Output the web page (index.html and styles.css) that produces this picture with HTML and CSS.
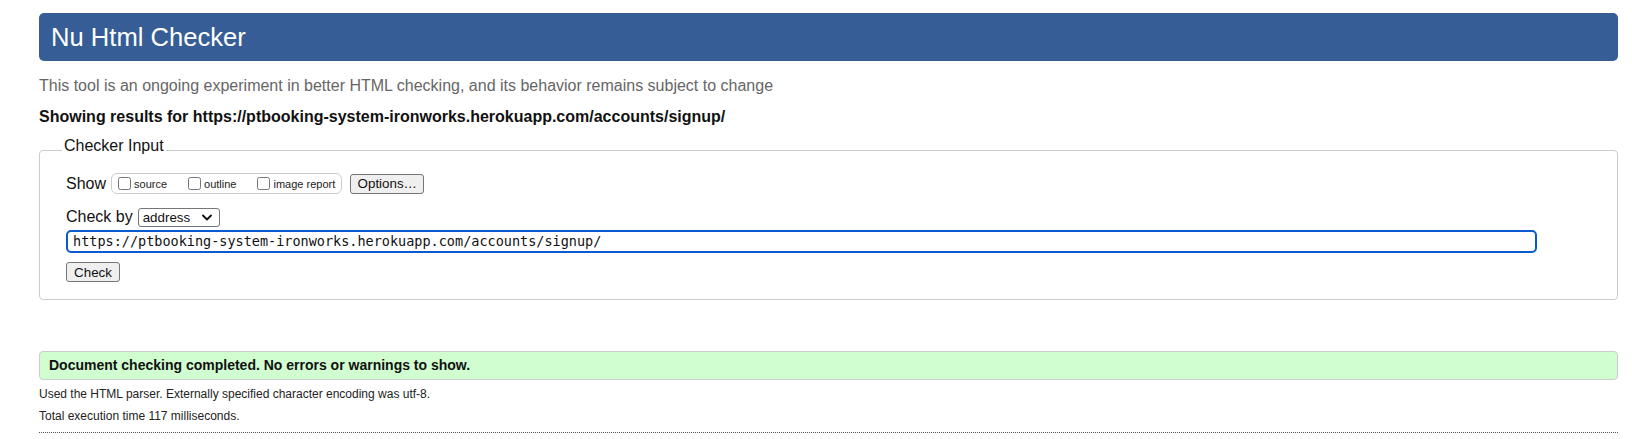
FILE: index.html
```html
<!DOCTYPE html>
<html lang="en">
<head>
<meta charset="utf-8">
<title>Nu Html Checker</title>
<link rel="stylesheet" href="styles.css">
</head>
<body>
<div class="page">
  <h1 class="title">Nu Html Checker</h1>
  <p class="desc">This tool is an ongoing experiment in better HTML checking, and its behavior remains subject to change</p>
  <p class="showing">Showing results for https://ptbooking-system-ironworks.herokuapp.com/accounts/signup/</p>
  <fieldset class="input-box">
    <legend class="legend">Checker Input</legend>
    <div class="row show-row">
      <span class="lbl">Show</span>
      <span class="opts">
        <label class="opt opt-source"><input type="checkbox" class="cb">source</label>
        <label class="opt opt-outline"><input type="checkbox" class="cb">outline</label>
        <label class="opt opt-image"><input type="checkbox" class="cb">image report</label>
      </span>
      <button class="btn btn-options" type="button">Options…</button>
    </div>
    <div class="row by-row">
      <span class="lbl">Check by</span>
      <span class="select">address<svg class="chev" width="10" height="7" viewBox="0 0 10 7"><path d="M1 1.5 L5 5.5 L9 1.5" fill="none" stroke="#111" stroke-width="1.8" stroke-linecap="round" stroke-linejoin="round"/></svg></span>
    </div>
    <div class="url">https://ptbooking-system-ironworks.herokuapp.com/accounts/signup/</div>
    <div class="row check-row">
      <button class="btn btn-check" type="button">Check</button>
    </div>
  </fieldset>
  <div class="success">Document checking completed. No errors or warnings to show.</div>
  <p class="info">Used the HTML parser. Externally specified character encoding was utf-8.</p>
  <p class="info info-last">Total execution time 117 milliseconds.</p>
  <div class="rule"></div>
</div>
</body>
</html>
```

FILE: styles.css
```css
* { box-sizing: border-box; }
html, body { margin: 0; padding: 0; background: #fff; }
body {
  font-family: "Liberation Sans", Arial, sans-serif;
  color: #111;
}
.page {
  padding: 13px 14px 0 39px;
}
.title {
  margin: 0;
  height: 48px;
  line-height: 48px;
  padding-left: 12px;
  background: #365d95;
  color: #fff;
  font-weight: normal;
  font-size: 25.6px;
  border-radius: 5px;
}
.desc {
  margin: 16px 0 0;
  font-size: 16px;
  line-height: 18px;
  color: #666;
}
.showing {
  margin: 13px 0 0;
  font-size: 16px;
  line-height: 18px;
  font-weight: bold;
  color: #111;
}
.input-box {
  margin: 11px 0 0;
  border: 1px solid #ccc;
  border-radius: 4px;
  padding: 9px 24px 17px 26px;
  min-width: 0;
}
.legend {
  font-size: 16px;
  line-height: 18px;
  padding: 0 2px 9px;
  margin-left: -4px;
  color: #111;
}
.row {
  display: flex;
  align-items: center;
}
.lbl {
  font-size: 16px;
  line-height: 18px;
}
.show-row { height: 21px; }
.opts {
  display: flex;
  align-items: center;
  margin-left: 5px;
  height: 21px;
  border: 1px solid #ccc;
  border-radius: 6px;
  padding: 0 6px 0 6px;
}
.opt {
  display: flex;
  align-items: center;
  font-size: 11px;
  color: #222;
}
.opt-source, .opt-outline { margin-right: 21px; }
.cb {
  width: 13px;
  height: 13px;
  margin: 0 3px 0 0;
}
.btn {
  font-family: "Liberation Sans", Arial, sans-serif;
  font-size: 13.33px;
  color: #111;
  background: #efefef;
  border: 1px solid #767676;
  border-radius: 3px;
  padding: 0 6px;
  height: 20px;
}
.btn-options { margin-left: 8px; width: 74px; }
.by-row { margin-top: 13px; height: 20px; }
.select {
  display: flex;
  align-items: center;
  justify-content: space-between;
  margin-left: 5px;
  width: 82px;
  height: 19px;
  padding: 0 7px 0 4px;
  border: 1px solid #767676;
  border-radius: 3px;
  font-size: 13.33px;
  background: #fff;
}
.url {
  margin-top: 3px;
  width: 1471px;
  height: 23px;
  border: 2px solid #0b5bd0;
  border-radius: 5px;
  padding: 0 0 0 5px;
  font-family: "DejaVu Sans Mono", Menlo, monospace;
  font-size: 13.5px;
  line-height: 19px;
  color: #111;
}
.check-row { margin-top: 9px; }
.btn-check { width: 54px; }
.success {
  margin-top: 51px;
  height: 29px;
  line-height: 27px;
  background: #d0fed0;
  border: 1px solid #ccc;
  border-radius: 4px;
  padding-left: 9px;
  font-weight: bold;
  font-size: 14px;
  color: #111;
}
.info {
  margin: 7px 0 0;
  font-size: 12px;
  line-height: 14px;
  color: #222;
}
.info + .info { margin-top: 8px; }
.rule {
  margin-top: 9px;
  border-top: 1px dotted #555;
}
```
